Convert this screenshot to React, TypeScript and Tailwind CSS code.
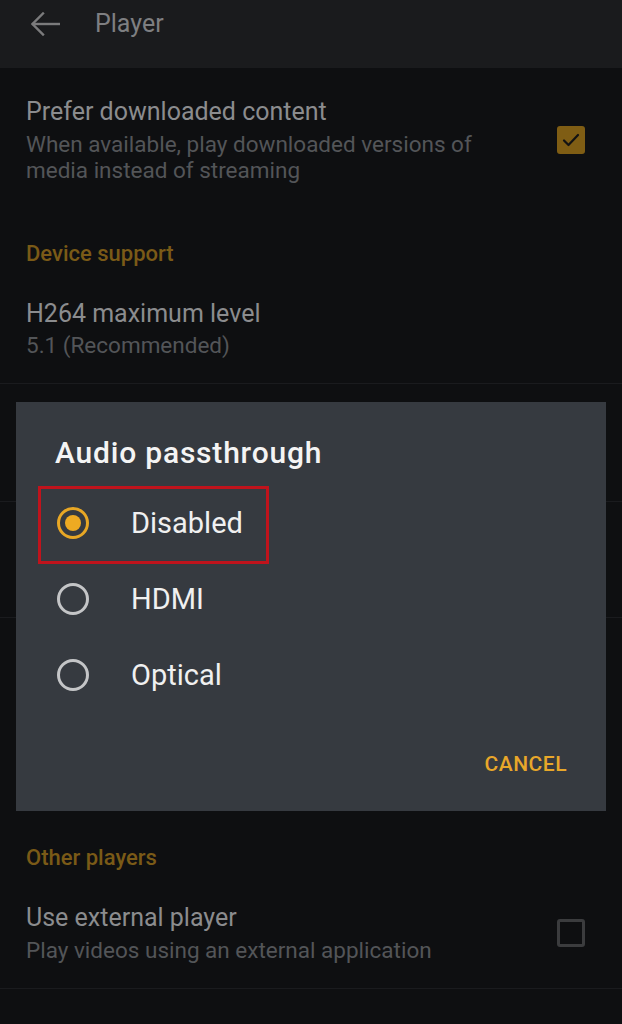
import { useMemo } from "react";

function BackArrow() {
  return (
    <svg width="30" height="24" viewBox="0 0 30 24" fill="none" stroke="#7b7b7c" strokeWidth="2.4" strokeLinecap="square">
      <path d="M29 12H3" />
      <path d="M13 1.5L2.5 12L13 22.5" />
    </svg>
  );
}

function DimCheckbox({ checked }: { checked: boolean }) {
  if (!checked) {
    return <div className="w-[28px] h-[28px] rounded-[3px] border-[3px] border-[#3b3c3e] shrink-0" />;
  }
  return (
    <div className="w-[28px] h-[28px] rounded-[3px] bg-[#7f5d14] flex items-center justify-center shrink-0">
      <svg width="22" height="22" viewBox="0 0 22 22" fill="none" stroke="#121213" strokeWidth="2.2" strokeLinecap="round" strokeLinejoin="round">
        <path d="M4 11.5l4.5 4.5l9.5-10" />
      </svg>
    </div>
  );
}

function Radio({ checked }: { checked: boolean }) {
  return (
    <div
      className={
        "w-[32px] h-[32px] rounded-full border-[3px] flex items-center justify-center shrink-0 " +
        (checked ? "border-[#e8a725]" : "border-[#c4c5c7]")
      }
    >
      {checked && <div className="w-[16px] h-[16px] rounded-full bg-[#eeaa22]" />}
    </div>
  );
}

export default function App() {
  const options = useMemo(() => ["Disabled", "HDMI", "Optical"], []);

  return (
    <div className="relative w-[622px] h-[1024px] overflow-hidden bg-[#0e0f11] font-['Roboto',sans-serif]">
      {/* toolbar */}
      <div className="h-[68px] bg-[#1a1b1d] flex items-start pl-[30px]">
        <div className="mt-[12px]">
          <BackArrow />
        </div>
        <span className="ml-[35px] mt-[9px] text-[25px] text-[#7e7f81] leading-[30px]">Player</span>
      </div>

      {/* preferences list */}
      <div className="flex items-center pl-[26px] pr-[37px] pt-[29px]">
        <div className="flex-1">
          <p className="text-[25px] leading-[30px] text-[#8b8c8e]">Prefer downloaded content</p>
          <p className="mt-[4px] text-[22.5px] leading-[26px] text-[#535558] w-[470px]">
            When available, play downloaded versions of media instead of streaming
          </p>
        </div>
        <DimCheckbox checked />
      </div>

      <p className="pl-[26px] mt-[59px] text-[22px] leading-[24px] font-medium text-[#7a5a17]">Device support</p>

      <div className="pl-[26px] pt-[33px] pb-[25px] border-b border-[#1a1b1e]">
        <p className="text-[25px] leading-[30px] text-[#8b8c8e]">H264 maximum level</p>
        <p className="mt-[3px] text-[22.5px] leading-[26px] text-[#535558]">5.1 (Recommended)</p>
      </div>

      {/* rows hidden behind the dialog */}
      <div className="h-[118px] border-b border-[#1a1b1e]" />
      <div className="h-[116px] border-b border-[#1a1b1e]" />
      <div className="h-[118px]" />

      <p className="pl-[26px] mt-[110px] text-[22px] leading-[24px] font-medium text-[#7a5a17]">Other players</p>

      <div className="flex items-center pl-[26px] pr-[37px] pt-[33px] pb-[25px] border-b border-[#1a1b1e]">
        <div className="flex-1">
          <p className="text-[25px] leading-[30px] text-[#8b8c8e]">Use external player</p>
          <p className="mt-[4px] text-[22.5px] leading-[26px] text-[#535558]">Play videos using an external application</p>
        </div>
        <DimCheckbox checked={false} />
      </div>

      {/* dialog */}
      <div className="absolute left-[16px] top-[402px] w-[590px] h-[409px] bg-[#363a40] flex flex-col">
        <h2 className="pl-[39px] pt-[34px] text-[30px] leading-[34px] font-medium tracking-[0.8px] text-[#f4f4f4]">
          Audio passthrough
        </h2>
        <div className="mt-[15px] flex flex-col">
          {options.map((opt, i) => (
            <div key={opt} className="relative h-[76px] flex items-center pl-[41px]">
              <Radio checked={i === 0} />
              <span className="ml-[42px] text-[29px] leading-[34px] text-[#f0f0f0]">{opt}</span>
              {i === 0 && (
                <div className="absolute left-[22px] top-[1px] w-[231px] h-[78px] border-[3px] border-[#c0131c]" />
              )}
            </div>
          ))}
        </div>
        <div className="flex justify-end pr-[39px] mt-[38px]">
          <span className="text-[21px] leading-[26px] font-medium tracking-[0.5px] text-[#e8a72a]">CANCEL</span>
        </div>
      </div>
    </div>
  );
}
